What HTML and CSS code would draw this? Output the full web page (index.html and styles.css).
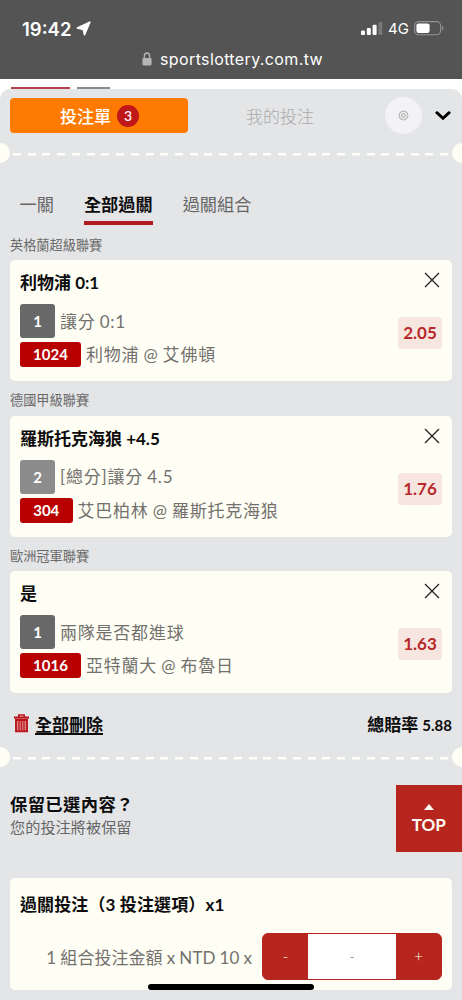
FILE: index.html
```html
<!DOCTYPE html>
<html lang="zh-Hant">
<head>
<meta charset="utf-8">
<title>投注單</title>
<link rel="stylesheet" href="styles.css">
</head>
<body>
<div class="screen">
  <header class="browser">
    <div class="status">
      <div class="clock"><span class="time">19:42</span>
        <svg class="locate" viewBox="0 0 15 15"><path d="M13.8 1.2 8.5 13.6 7.3 8.4 1.4 7z" fill="#fff" stroke="#fff" stroke-width="1.7" stroke-linejoin="round"/></svg>
      </div>
      <div class="signals">
        <svg class="bars" viewBox="0 0 22 13"><rect y="8.5" width="4" height="4.5" rx="1" fill="#fff"/><rect x="5.8" y="6" width="4" height="7" rx="1" fill="#fff"/><rect x="11.6" y="2.8" width="4" height="10.2" rx="1" fill="#fff"/><rect x="17.4" y="0" width="4" height="13" rx="1" fill="#777"/></svg>
        <span class="network">4G</span>
        <svg class="battery" viewBox="0 0 30 15"><rect x=".6" y=".6" width="26" height="13.2" rx="4" fill="none" stroke="#929292" stroke-width="1.1"/><rect x="2.4" y="2.4" width="13.2" height="9.6" rx="2.2" fill="#fff"/><path d="M28 5v4.6c1.9-.7 1.9-3.9 0-4.6z" fill="#929292"/></svg>
      </div>
    </div>
    <div class="address">
      <svg class="lock" viewBox="0 0 10 14"><path d="M2.3 7V4.2a2.7 3.2 0 0 1 5.4 0V7" fill="none" stroke="#b5b5b5" stroke-width="1.3"/><rect x=".4" y="6" width="9.2" height="7.5" rx="1.4" fill="#b5b5b5"/></svg>
      <span>sportslottery.com.tw</span>
    </div>
  </header>
  <div class="peek"><i class="peek-red"></i><i class="peek-grey"></i></div>
  <main class="panel">
    <nav class="tabs">
      <div class="tab-active">投注單<span class="count">3</span></div>
      <div class="tab">我的投注</div>
      <div class="gear"><svg viewBox="0 0 12 12"><path d="m6 .8 1 .9 1.4-.2.5 1.4 1.4.5-.2 1.4.9 1.2-.9 1.1.2 1.5-1.4.4-.5 1.4-1.4-.2-1 .9-1-.9-1.4.2-.5-1.4-1.4-.4.2-1.5L1 6l.9-1.2-.2-1.4 1.4-.5.5-1.4L5 1.7z" fill="none" stroke="#888" stroke-width=".8"/><circle cx="6" cy="6" r="2" fill="none" stroke="#888" stroke-width=".8"/></svg></div>
      <svg class="chevron" viewBox="0 0 14 9"><path d="m1.5 1.5 5.5 5 5.5-5" fill="none" stroke="#000" stroke-width="2.6" stroke-linecap="round"/></svg>
    </nav>
    <div class="tear"></div>
    <nav class="modes"><span>一關</span><span class="mode-on">全部過關</span><span>過關組合</span></nav>

    <section class="bet">
      <h2 class="league">英格蘭超級聯賽</h2>
      <article class="card slip">
        <h3 class="pick">利物浦 0:1</h3>
        <svg class="close" viewBox="0 0 16 16"><path d="m1 1 14 14M15 1 1 15"/></svg>
        <div class="line market"><b class="choice">1</b><span>讓分 0:1</span></div>
        <div class="line match"><b class="code">1024</b><span>利物浦 @ 艾佛頓</span></div>
        <div class="odds">2.05</div>
      </article>
    </section>
    <section class="bet">
      <h2 class="league">德國甲級聯賽</h2>
      <article class="card slip">
        <h3 class="pick">羅斯托克海狼 +4.5</h3>
        <svg class="close" viewBox="0 0 16 16"><path d="m1 1 14 14M15 1 1 15"/></svg>
        <div class="line market"><b class="choice choice-alt">2</b><span>[總分]讓分 4.5</span></div>
        <div class="line match"><b class="code code-short">304</b><span>艾巴柏林 @ 羅斯托克海狼</span></div>
        <div class="odds">1.76</div>
      </article>
    </section>
    <section class="bet">
      <h2 class="league">歐洲冠軍聯賽</h2>
      <article class="card slip">
        <h3 class="pick">是</h3>
        <svg class="close" viewBox="0 0 16 16"><path d="m1 1 14 14M15 1 1 15"/></svg>
        <div class="line market"><b class="choice">1</b><span>兩隊是否都進球</span></div>
        <div class="line match"><b class="code">1016</b><span>亞特蘭大 @ 布魯日</span></div>
        <div class="odds">1.63</div>
      </article>
    </section>

    <div class="summary">
      <div class="clear"><svg viewBox="0 0 15 19"><path d="M4.8 3V1h5.4v2" fill="none" stroke="#bb141a" stroke-width="1.5"/><path d="M0 2.5h15v2.2H0z" fill="#bb141a"/><path d="M2 6v11.2h11V6z" fill="#dc8a8c" stroke="#bb141a" stroke-width="1.9"/><path d="M5 7v9M7.5 7v9M10 7v9" fill="none" stroke="#bb141a" stroke-width="1.3"/></svg><span>全部刪除</span></div>
      <div class="total">總賠率 <span>5.88</span></div>
    </div>
    <div class="tear"></div>
    <div class="keep">
      <div><h3 class="keep-title">保留已選內容？</h3><p class="keep-note">您的投注將被保留</p></div>
      <div class="top"><i></i><span>TOP</span></div>
    </div>
    <section class="card stake">
      <h3 class="pick">過關投注（3 投注選項）x1</h3>
      <div class="stake-row"><span class="formula">1 組合投注金額 x NTD 10 x</span>
        <div class="stepper"><span>-</span><span class="amount">-</span><span>+</span></div>
      </div>
    </section>
  </main>
  <div class="home"></div>
</div>
</body>
</html>
```

FILE: styles.css
```css
* { box-sizing: border-box; }
body { margin: 0; font-family: Lato, "Noto Sans CJK TC", sans-serif; background: #fff; color: #0c0c0c; }
h2, h3, p { margin: 0; }
svg { display: block; flex: none; }
.screen { position: relative; width: 462px; height: 1000px; overflow: hidden; display: flex; flex-direction: column; white-space: nowrap; }

.browser { height: 79px; flex: none; background: #545454; color: #fff; font-family: Inter, sans-serif; }
.status { height: 46px; padding: 11px 18px 0 22px; display: flex; justify-content: space-between; align-items: center; }
.clock, .signals { display: flex; align-items: center; }
.time { font-size: 18.5px; font-weight: 600; }
.locate { width: 15px; height: 15px; margin-left: 5px; }
.bars { width: 22px; height: 13px; }
.network { font-size: 15px; margin: 0 5px 0 5px; }
.battery { width: 30px; height: 15px; }
.address { height: 25px; padding-left: 142px; display: flex; align-items: center; gap: 8px; font-size: 16px; letter-spacing: .38px; }
.lock { width: 10px; height: 14px; }

.peek { height: 10px; flex: none; padding: 8px 0 0 11px; display: flex; gap: 7px; }
.peek i { height: 2px; }
.peek-red { width: 59px; background: #b5434b; }
.peek-grey { width: 33px; background: #8b8b8b; }

.panel { height: 911px; flex: none; padding-top: 9px; background: #e4e5e7; border-radius: 10px 10px 0 0; }
.tabs { height: 35px; padding: 0 11px 0 10px; display: flex; align-items: center; }
.tab-active { width: 178px; height: 35px; border-radius: 4px; background: #ff7a00; color: #fff; display: flex; align-items: center; justify-content: center; gap: 6px; padding-left: 1px; font-size: 17px; font-weight: 500; }
.count { width: 22px; height: 22px; border-radius: 50%; background: #c01818; font-size: 14px; line-height: 22px; text-align: center; }
.tab { width: 197px; padding-right: 13px; text-align: center; font-size: 17px; font-weight: 300; color: #aaa; }
.gear { width: 37px; height: 37px; border-radius: 50%; background: #f3f3f6; display: grid; place-items: center; }
.gear svg { width: 11px; height: 11px; }
.chevron { width: 16px; height: 10px; margin-left: 13px; }

.tear { height: 20px; background:
  radial-gradient(circle at 0 50%, #fffef5 9.5px, transparent 10.2px),
  radial-gradient(circle at 462px 50%, #fffef5 9.5px, transparent 10.2px),
  repeating-linear-gradient(90deg, #fffef9 0 8px, transparent 8px 14.73px) 12.5px 10px / 439px 2.5px no-repeat; }
.tabs + .tear { margin-top: 10px; }

.modes { height: 72.5px; padding: 29px 19.5px 0; display: flex; gap: 30px; font-size: 17.2px; line-height: 26px; color: #666; }
.mode-on { height: 33px; border-bottom: 4px solid #b21a22; color: #0c0c0c; font-weight: 700; }

.bet { height: 155.7px; padding: 0 10px; }
.league { height: 24.5px; font-size: 13.2px; line-height: 19px; font-weight: 400; color: #6a6a6a; }
.card { background: #fffef5; border-radius: 5px; }
.slip { position: relative; height: 121.3px; padding: 10px; }
.pick { height: 34px; font-size: 17px; line-height: 25px; font-weight: 700; }
.close { position: absolute; right: 12px; top: 12px; width: 16px; height: 16px; fill: none; stroke: #222; stroke-width: 1.3; }
.line { display: flex; align-items: center; gap: 5px; font-size: 17px; letter-spacing: .78px; word-spacing: -1px; color: #73716d; }
.line span { padding-bottom: 2px; }
.market { height: 34px; }
.match { height: 25px; margin-top: 4px; }
.choice, .code { color: #fff; border-radius: 3px; text-align: center; font-size: 15px; letter-spacing: 0; }
.choice { width: 35px; height: 34px; line-height: 35px; background: #686868; }
.choice-alt { background: #8c8c8c; }
.code { width: 61px; height: 25px; line-height: 25px; background: #b90000; }
.code-short { width: 52.5px; }
.odds { position: absolute; right: 10px; top: 57px; width: 44px; height: 32px; border-radius: 4px; background: #f7e6e0; color: #b7282a; font-size: 17px; line-height: 32px; font-weight: 700; text-align: center; }

.summary { height: 24px; margin-top: 8.5px; padding: 0 10px 0 14px; display: flex; justify-content: space-between; align-items: center; font-size: 17px; font-weight: 700; }
.clear { display: flex; align-items: center; gap: 6px; }
.clear svg { width: 15px; height: 19px; }
.clear span { text-decoration: underline; text-decoration-thickness: 1.5px; text-underline-offset: 2px; }
.total span { font-size: 15px; }
.summary + .tear { margin-top: 11.8px; }

.keep { height: 111.5px; padding: 18.5px 0 0 10px; display: flex; justify-content: space-between; }
.keep-title { height: 24px; margin-top: 7px; font-size: 17.3px; line-height: 25px; letter-spacing: .4px; }
.keep-note { font-size: 15.2px; line-height: 22px; color: #666; }
.top { width: 66.5px; height: 66.5px; background: #b6261e; color: #fffef5; display: flex; flex-direction: column; align-items: center; padding-top: 19px; font-size: 17px; font-weight: 700; line-height: 26px; }
.top i { border: 5px solid transparent; border-top: 0; border-bottom: 6px solid #fffef5; }
.top span { margin-top: 2px; }

.stake { height: 111.5px; margin: 0 10px; padding: 14px 10px 0; }
.stake .pick { height: 41px; letter-spacing: .12px; }
.stake-row { display: flex; justify-content: flex-end; align-items: center; gap: 10px; }
.formula { font-size: 17px; letter-spacing: .05px; word-spacing: -.3px; color: #73716d; }
.stepper { width: 180px; height: 47px; border: 1px solid #b6261e; border-radius: 6px; background: #b6261e; display: grid; grid-template-columns: 45px 1fr 45px; text-align: center; line-height: 45px; font-size: 15px; font-weight: 300; color: #fffef5; }
.amount { background: #fff; color: #777; }
.home { position: absolute; left: 148px; top: 984px; width: 166px; height: 6px; border-radius: 3px; background: #000; }
```
